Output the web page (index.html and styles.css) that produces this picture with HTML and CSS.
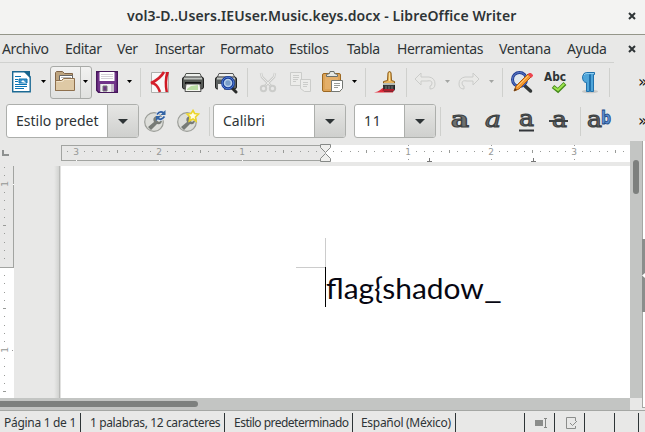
FILE: index.html
```
<!DOCTYPE html>
<html lang="es">
<head>
<meta charset="utf-8">
<title>LibreOffice Writer</title>
<link rel="stylesheet" href="styles.css">
</head>
<body>
<div class="window">
  <header class="titlebar">
    <h1>vol3-D..Users.IEUser.Music.keys.docx - LibreOffice Writer</h1>
    <svg class="close" viewBox="0 0 8 8"><path d="M1 1l6 6M7 1L1 7"/></svg>
  </header>
  <nav class="menubar">
    <span>Archivo</span><span>Editar</span><span>Ver</span><span>Insertar</span><span>Formato</span><span>Estilos</span><span>Tabla</span><span>Herramientas</span><span>Ventana</span><span>Ayuda</span>
    <svg class="close" viewBox="0 0 8 8"><path d="M1 1l6 6M7 1L1 7"/></svg>
  </nav>

  <div class="toolbar standard">
    <svg class="icon" viewBox="0 0 24 24"><path d="M3.700 1.700h12.500l5 5v15H3.700z" fill="#fff" stroke="#1c6a94" stroke-width="1.400"/><path d="M14 1h7v7z" fill="#17648d"/><path d="M6 6.500h6M6 9.500h3M6 11.500h3M6 14.500h12M6 16.500h12M6 18.500h9" stroke="#0874b4"/><path d="M10 9h8v4h-8z" fill="#3d92c7" stroke="#0874b4"/><path d="M12 12l2-2 3 3" fill="#fff"/></svg>
    <svg class="arrow" viewBox="0 0 8 24"><path d="M1 10h5L3.500 13z"/></svg>
    <div class="split">
      <svg class="icon" viewBox="0 0 24 24"><path d="M1.500 20.500v-18l1-1h6l2 2h8v17z" fill="#bda47e" stroke="#806448"/><path d="M5.500 5.500h13v8h-13z" fill="#fff" stroke="#666"/><path d="M7 7.500h10" stroke="#bbb"/><path d="M1.500 20.500v-10h6l2-2h11v12z" fill="#dec9a5" stroke="#8e704d"/><path d="M2.500 11.500h6l2-2h9" stroke="#f2e4cc" fill="none"/></svg>
      <svg class="arrow" viewBox="0 0 8 24"><path d="M1 10h5L3.500 13z"/></svg>
    </div>
    <svg class="icon" viewBox="0 0 24 24"><path d="M1.700 1.700h20.600v20.600H3.500l-1.800-2z" fill="#713489" stroke="#46165b" stroke-width="1.400"/><path d="M4.500 2h15v9h-15z" fill="#fff"/><path d="M6 4.500h12M6 6.500h12M6 8.500h12" stroke="#d5d1d7"/><path d="M5 14h14v8H5z" fill="#c7bfc9"/><path d="M6 14h10v8H6z" fill="#eee"/><path d="M8 16h4v5H8z" fill="#6d3684" stroke="#777"/></svg>
    <svg class="arrow" viewBox="0 0 8 24"><path d="M1 10h5L3.500 13z"/></svg>
    <i class="sep"></i>
    <svg class="icon" viewBox="0 0 24 24"><path d="M3.500 2.500h17v20h-17z" fill="#f8f8f8" stroke="#aeb0ad"/><path d="M16 2Q12 9 3 13q6 0 9 9" fill="none" stroke="#d51f2b" stroke-width="2.600"/><path d="M18 2l3 0q-3 9-1 20h-2.500q-2-10 .5-20z" fill="#cf1924"/></svg>
    <svg class="icon" viewBox="0 0 24 24"><path d="M3 8L5 3.500h14L21 8z" fill="#eef1ed" stroke="#4d504c"/><path d="M1.500 9q0-2 2-2h17q2 0 2 2v8q0 2-2 2h-17q-2 0-2-2z" fill="#555955" stroke="#222"/><path d="M3 8.500h18" stroke="#c2c6c2" stroke-width="2"/><path d="M4 13h16" stroke="#111" stroke-width="2"/><path d="M5 14h14l1 7.500H4z" fill="#f5f6f0" stroke="#555"/><path d="M6 19l4-3 7-1v5H6z" fill="#b9dca2"/></svg>
    <svg class="icon" viewBox="0 0 24 24"><path d="M3 8L5 3.500h14L21 8z" fill="#eef0ef" stroke="#555"/><path d="M1.500 9q0-2 2-2h17q2 0 2 2v8q0 2-2 2h-17q-2 0-2-2z" fill="#5b605f" stroke="#222"/><path d="M3 8.500h18" stroke="#c2c6c2" stroke-width="2"/><path d="M4 14h6v6H4z" fill="#eee"/><path d="M18 18l4 4" stroke="#292b2a" stroke-width="3" stroke-linecap="round"/><circle cx="14" cy="13" r="5.600" fill="#b7cfe9" stroke="#163b97" stroke-width="2.600"/><circle cx="14" cy="13" r="5.800" fill="none" stroke="#4e78d0"/><circle cx="14" cy="13" r="2.700" fill="#799eca"/></svg>
    <i class="sep"></i>
    <svg class="icon pale" viewBox="0 0 24 24"><path d="M5 3l1 4 9 9M19 3l-1 4-9 9" stroke-width="2.500"/><path d="M5 3l1 4 9 9M19 3l-1 4-9 9" stroke="#e9e9e7" stroke-width="1"/><circle cx="7.500" cy="18.500" r="2.700" stroke-width="2"/><circle cx="16.500" cy="18.500" r="2.700" stroke-width="2"/></svg>
    <svg class="icon pale" viewBox="0 0 24 24"><path d="M2.500 2.500h11v13h-11z" fill="#ececea"/><path d="M5 5.500h6M5 7.500h6M5 9.500h5M5 11.500h3"/><path d="M12.500 9.500h10v12h-6l-4-3z" fill="#ececea"/><path d="M15 12.500h5M15 14.500h5M15 16.500h4"/></svg>
    <svg class="icon" viewBox="0 0 24 24"><rect x="2.500" y="3.500" width="18" height="18" rx="1.500" fill="#dca357" stroke="#9c6822"/><path d="M5 6h13v13H5z" fill="#e4af69"/><path d="M6.500 6.500v-2l3-1 .5-2h4l.5 2 3 1v2z" fill="#e5e8e4" stroke="#6a6f6a"/><path d="M11.500 10.500h11v8l-3 3h-8z" fill="#fff" stroke="#737773"/><path d="M14 13.500h6M14 15.500h6M14 17.500h4" stroke="#9a9d9a"/></svg>
    <svg class="arrow" viewBox="0 0 8 24"><path d="M1 10h5L3.500 13z"/></svg>
    <i class="sep"></i>
    <svg class="icon" viewBox="0 0 24 24"><path d="M0 22.500c6-1 7-4 10-5h10l-1 5z" fill="#e12b3a"/><path d="M13.500 10.500l.5-8q1.500-2 3 0l.5 8 3 1v2h-11v-2z" fill="#e9b55d" stroke="#8b5d1c"/><path d="M15.500 3v8" stroke="#f9df9a"/><path d="M9.500 14.500h11v5l-1 1.500h-9.500z" fill="#343838" stroke="#202222"/><path d="M9 14h12" stroke="#b5bbb5" stroke-width="2"/><path d="M10 19h10v2H8z" fill="#ad1d2b"/><path d="M12 16v3M15 16v3M18 16v3" stroke="#777"/></svg>
    <i class="sep"></i>
    <svg class="icon pale" viewBox="0 0 24 24"><path d="M2 9l6-6v4h8q6 1 6 7 0 5-5 5v-3q2 0 2-3t-5-2H8v4z" fill="#e9e9e7"/></svg>
    <svg class="arrow off" viewBox="0 0 8 24"><path d="M1 10h5L3.500 13z"/></svg>
    <svg class="icon pale" viewBox="0 0 24 24"><path d="M22 9l-6-6v4H8q-6 1-6 7 0 5 5 5v-3q-2 0-2-3t5-2h6v4z" fill="#e9e9e7"/></svg>
    <svg class="arrow off" viewBox="0 0 8 24"><path d="M1 10h5L3.500 13z"/></svg>
    <i class="sep"></i>
    <svg class="icon" viewBox="0 0 24 24"><path d="M15 16l5.500 5" stroke="#333737" stroke-width="3.500" stroke-linecap="round"/><circle cx="9.500" cy="9.500" r="7" fill="#dfe7ed" stroke="#213e93" stroke-width="3"/><circle cx="9.500" cy="9.500" r="7" fill="none" stroke="#6682cb"/><path d="M4 21l2-5L18 4l3 3L9 19z" fill="#f59a32" stroke="#ad5b0d"/><path d="M7 17L18 6" stroke="#ffca72"/><path d="M18 4l1-1h2l2 2v1l-2 2z" fill="#ed4550"/><path d="M4 21l1-3 2 2z" fill="#533822"/></svg>
    <svg class="icon" viewBox="0 0 24 24"><text class="abc" x="1" y="11" textLength="22" lengthAdjust="spacingAndGlyphs">Abc</text><path d="M10 16.500l5 4 7-7" fill="none" stroke="#468b1d" stroke-width="4"/><path d="M10.700 17l4.300 3 6.300-6.300" fill="none" stroke="#9ee44e" stroke-width="2"/></svg>
    <svg class="icon" viewBox="0 0 24 24"><ellipse cx="14" cy="21.500" rx="8" ry="1.800" fill="#c7c8c6"/><path d="M6.500 6.500q1-4 4-4h8v2h-1v17h-3v-17h-1v17h-3v-9q-4 0-4-6z" fill="#4fa5d9" stroke="#2071ac"/><path d="M8 5q1-1.500 3-1.500h7" fill="none" stroke="#8dcdf0"/></svg>
    <i class="sep"></i>
    <span class="more">»</span>
  </div>

  <div class="toolbar formatting">
    <div class="combo style"><b><span>Estilo predeterminado</span></b><i></i></div>
    <svg class="icon" viewBox="0 0 24 24"><circle cx="11" cy="13" r="9.300" fill="#dddeda" stroke="#9c9e99" stroke-width="1.200"/><path d="M5 18l6-5q-2-4 2-6v4l3 2 3-2q0 5-5 4l-6 6z" fill="#777b76"/><path d="M14 5.500q4-5 7.500-.5M21.500 7.500q-4 5-7.500 1" fill="none" stroke="#dce6f2" stroke-width="3.500"/><path d="M14 5.500q4-5 7.500-.5M21.500 7.500q-4 5-7.500 1" fill="none" stroke="#2d5ca2" stroke-width="1.800"/><path d="M22.500 1v5h-5zM13 12V7h5z" fill="#3465a4"/></svg>
    <svg class="icon" viewBox="0 0 24 24"><circle cx="11" cy="13" r="9.300" fill="#dddeda" stroke="#9c9e99" stroke-width="1.200"/><path d="M5 18l6-5q-2-4 2-6v4l3 2 3-2q0 5-5 4l-6 6z" fill="#777b76"/><path d="M17 1.500l1.600 3 3.900.5-3 3 .6 4-3.100-2-3.700 2 .8-4-3-3 4-.5z" fill="#fffce0" stroke="#ecd52a" stroke-width="1.600"/></svg>
    <i class="sep"></i>
    <div class="combo font"><b>Calibri</b><i></i></div>
    <div class="combo size"><b>11</b><i></i></div>
    <i class="sep"></i>
    <svg class="icon glyph" viewBox="0 0 24 24"><text x="3" y="18" textLength="18" lengthAdjust="spacingAndGlyphs" font-weight="bold">a</text></svg>
    <svg class="icon glyph" viewBox="0 0 24 24"><text x="3" y="18" textLength="16" lengthAdjust="spacingAndGlyphs" font-style="italic">a</text></svg>
    <svg class="icon glyph" viewBox="0 0 24 24"><text x="4" y="17" textLength="15" lengthAdjust="spacingAndGlyphs">a</text><path d="M4 21.500h15" stroke="#33363a" stroke-width="2"/></svg>
    <svg class="icon glyph" viewBox="0 0 24 24"><text x="4" y="18" textLength="15" lengthAdjust="spacingAndGlyphs">a</text><path d="M1 12h19" stroke="#3d4143" stroke-width="2"/></svg>
    <i class="sep"></i>
    <svg class="icon wide glyph" viewBox="0 0 28 24"><text x="1" y="18" textLength="15" lengthAdjust="spacingAndGlyphs">a</text><text class="sup" x="15" y="15" textLength="10" lengthAdjust="spacingAndGlyphs">b</text></svg>
    <span class="more">»</span>
  </div>

  <main class="workspace">
    <div class="editor">
      <svg class="hruler" viewBox="0 0 630 25" shape-rendering="crispEdges">
        <defs>
          <pattern id="hticks" x="76" y="0" width="83" height="25" patternUnits="userSpaceOnUse"><path fill="#999b98" d="M8 10h1v1h-1zM16 10h1v1h-1zM25 10h1v1h-1zM33 10h1v1h-1zM41 9h1v3h-1zM49 10h1v1h-1zM58 10h1v1h-1zM66 10h1v1h-1zM74 10h1v1h-1z"/></pattern>
        </defs>
        <path d="M2 9h2v4h5v2H2z" fill="#8e9190"/>
        <path d="M325 4h305v17H325z" fill="#fff"/>
        <path d="M325 4.500H61.500v15H325" fill="none" stroke="#a2a4a1"/>
        <path d="M66 5h564v14H66z" fill="url(#hticks)"/>
        <path d="M76 19h1v1h-1zM159 19h1v1h-1zM242 19h1v1h-1z" fill="#fff"/>
        <path d="M408 4h1v1h-1zM491 4h1v1h-1zM574 4h1v1h-1zM408 18h1v1h-1zM491 18h1v1h-1zM574 18h1v1h-1z" fill="#999"/>
        <path d="M427 20.500h5M429.500 17v4M531 20.500h5M533.500 17v4" stroke="#777"/>
        <g class="nums"><text x="76" y="14">3</text><text x="159" y="14">2</text><text x="242" y="14">1</text><text x="408" y="14">1</text><text x="491" y="14">2</text><text x="574" y="14">3</text></g>
        <path d="M320.500 3.500h10v3l-5 5-5-5zM320.500 20.500h10v-3l-5-5-5 5z" fill="#f0f0ee" stroke="#868987" shape-rendering="auto"/>
      </svg>
      <div class="canvas">
        <svg class="vruler" viewBox="0 0 14 232" shape-rendering="crispEdges">
          <defs>
            <pattern id="vticks" x="0" y="18" width="14" height="83" patternUnits="userSpaceOnUse"><path fill="#999b98" d="M4 8h1v1h-1zM4 16h1v1h-1zM4 25h1v1h-1zM4 33h1v1h-1zM3 41h3v1h-3zM4 49h1v1h-1zM4 58h1v1h-1zM4 66h1v1h-1zM4 74h1v1h-1z"/></pattern>
          </defs>
          <path d="M0 102h14v130H0z" fill="#fff"/>
          <path d="M13.500 0v101M0 101.500h14" stroke="#a2a4a1"/>
          <path d="M0 0h12v232H0z" fill="url(#vticks)"/>
          <path d="M13 18h1v1h-1z" fill="#fff"/><path d="M12 184h1v1h-1z" fill="#999"/>
          <g class="nums"><text transform="translate(8 18) rotate(-90)">1</text><text transform="translate(8 184) rotate(-90)">1</text></g>
        </svg>
        <article class="page"><p><span class="run">flag{shadow<span class="under">_</span></span></p></article>
      </div>
      <div class="hscroll"><i></i></div>
    </div>
    <div class="vscroll"><i></i></div>
    <aside class="sidebar"><svg viewBox="0 0 3 73"><path d="M3 34v5L0 36.500z" fill="#fff"/></svg></aside>
  </main>

  <footer class="statusbar">
    <span class="pages">Página 1 de 1</span>
    <span class="words">1 palabras, 12 caracteres</span>
    <span class="pstyle">Estilo predeterminado</span>
    <span class="lang">Español (México)</span>
    <span class="blank"></span>
    <span class="mode"><svg viewBox="0 0 12 10"><path d="M0 2h8v6H0z" fill="#8b8d8b"/><path d="M9 .5h3M9 9.500h3M10.500 0v10" stroke="#858785"/></svg></span>
    <span class="sign"><svg viewBox="0 0 12 12"><path d="M9.500 4V.500h-9v11h9V9M4 6l2.500 2.500L11 4" fill="none" stroke="#8b8d8b"/></svg></span>
    <span class="cell"></span>
    <span class="cell last"></span>
  </footer>
</div>
</body>
</html>
```
FILE: styles.css
```
* { box-sizing: border-box; }
body { margin: 0; overflow: hidden; background: #e8e8e7; color: #2e3436; font: 14px/20px "Noto Sans", sans-serif; }
svg { display: block; }
.window { width: 645px; height: 432px; display: flex; flex-direction: column; }

.titlebar { flex: none; height: 35px; display: flex; align-items: center; background: #f3f3f2; border-bottom: 1px solid #94968a; padding: 0 9px 2px 127px; justify-content: space-between; }
.titlebar h1 { margin: 0; font-size: 14px; line-height: 20px; font-weight: 600; white-space: nowrap; letter-spacing: .12px; }
.close { width: 8px; height: 8px; fill: none; stroke: #2e3436; stroke-width: 2; }

.menubar { flex: none; height: 28px; display: grid; grid-template-columns: 63px 52px 38px 65px 69px 58px 50px 102px 68px 61px 8px; padding-left: 2px; align-items: center; background: linear-gradient(#d0d1cf, #d0d1cf) 0 27px / 614px 1px no-repeat; letter-spacing: -.35px; white-space: nowrap; }

.toolbar { flex: none; display: grid; align-items: center; }
.standard { height: 38px; padding-left: 9px; grid-template-columns: 31px 10px 45px 31px 14px 8px 33px 33px 33px 9px 32px 32px 31px 14px 9px 32px 7px 31px 13px 31px 14px 8px 33px 33px 33px 29px 7px; }
.formatting { height: 40px; padding-left: 6px; grid-template-columns: 137px 33px 33px 4px 141px 86px 8px 34px 33px 33px 32px 6px 52px 7px; }
.icon { width: 24px; height: 24px; fill: none; }
.icon.wide { width: 28px; }
.arrow { width: 8px; height: 24px; fill: #000; }
.arrow.off { fill: #a3a5a3; }
.sep { width: 1px; height: 29px; background: #cfd0cd; }
.pale { stroke: #cbccca; }
.more { font: 16px/20px "DejaVu Sans", sans-serif; color: #111; }
.abc { font: bold 12px "DejaVu Sans", sans-serif; fill: #2e3436; }
.split { display: flex; align-items: center; width: 42px; height: 33px; padding-left: 3px; border: 1px solid #a8aaa7; border-radius: 3px; background: linear-gradient(90deg, transparent 29px, #b1b3b0 29px, #b1b3b0 30px, transparent 30px), linear-gradient(#f2f2f1, #e0e1df); }
.split .arrow { margin-left: 4px; }
.combo { display: flex; height: 34px; border: 1px solid #adafac; border-radius: 3px; background: #fff; overflow: hidden; }
.combo b { flex: 1; min-width: 0; padding: 6px 8px 0 9px; font-weight: 400; white-space: nowrap; }
.combo b span { display: block; overflow: hidden; }
.combo i { display: flex; align-items: center; justify-content: center; width: 31px; border-left: 1px solid #adafac; background: linear-gradient(#e6e6e4, #cfd0ce); }
.combo i::after { content: ""; border: 5px solid transparent; border-top-color: #2e3436; border-bottom: 0; }
.style { width: 133px; }
.font { width: 133px; }
.size { width: 82px; }
.size b { letter-spacing: .7px; }
.glyph text { font-family: "DejaVu Serif", serif; font-size: 22px; fill: #6d706f; stroke: #3d4143; stroke-width: 1.1px; }
.glyph .sup { font: bold 17px "DejaVu Sans", sans-serif; fill: #5b8fd0; stroke: #204a87; stroke-width: .9px; }

.workspace { flex: none; height: 270px; display: flex; border-bottom: 1px solid #a5a7a4; }
.editor { width: 630px; display: flex; flex-direction: column; }
.hruler { width: 630px; height: 25px; flex: none; }
.nums { font: 9px "DejaVu Sans", sans-serif; fill: #969896; text-anchor: middle; }
.canvas { height: 232px; display: flex; background: linear-gradient(90deg, transparent 54px, #d2d3d1 59px, #b9bab8 59px) 0 0 / 60px 100% no-repeat; }
.vruler { width: 14px; height: 232px; flex: none; }
.page { flex: 1; margin-left: 46px; border-left: 1px solid #e1e1e0; background: linear-gradient(#ccc, #ccc) 264px 72px / 1px 29px no-repeat, linear-gradient(#ccc, #ccc) 235px 101px / 29px 1px no-repeat, #fff; }
.page p { margin: 101px 0 0 264px; height: 40px; border-left: 1px solid #000; font: 29px/42px Lato, sans-serif; color: #070712; }
.run { display: inline-block; transform: scaleX(1.032); transform-origin: 0 50%; }
.under { display: inline-block; transform: scaleX(1.3); transform-origin: 0 50%; }
.hscroll { height: 12px; padding-top: 3px; background: #c3c5c3; }
.hscroll i { display: block; width: 198px; height: 6px; border-radius: 0 3px 3px 0; background: #7d807e; }
.vscroll { width: 12px; height: 257px; padding: 19px 3px 0; background: #c3c5c3; }
.vscroll i { display: block; width: 6px; height: 34px; border-radius: 3px; background: #7d807e; }
.sidebar { flex: 1; height: 267px; border-left: 1px solid #a5a7a4; border-bottom: 1px solid #a5a7a4; background: #fff; padding-top: 98px; }
.sidebar svg { width: 3px; height: 73px; margin-left: -1px; background: #8b8e8c; }

.statusbar { flex: 1; display: flex; font-size: 12px; line-height: 18px; white-space: nowrap; letter-spacing: -.3px; padding-top: 2px; }
.statusbar span { height: 19px; border-right: 1px solid #2e3436; flex: none; padding-left: 9px; padding-top: 1px; }
.statusbar .pages { width: 81px; padding-left: 4px; }
.statusbar .words { width: 144px; letter-spacing: -.38px; }
.statusbar .pstyle { width: 128px; letter-spacing: -.52px; }
.statusbar .lang { width: 103px; padding-left: 8px; }
.statusbar .blank { width: 69px; }
.statusbar .mode { width: 30px; padding: 5px 0 0 10px; }
.statusbar .mode svg { width: 12px; height: 10px; }
.statusbar .sign { width: 30px; padding: 4px 0 0 11px; }
.statusbar .sign svg { width: 12px; height: 12px; }
.statusbar .cell { width: 30px; }
.statusbar .last { width: 24px; }
```
